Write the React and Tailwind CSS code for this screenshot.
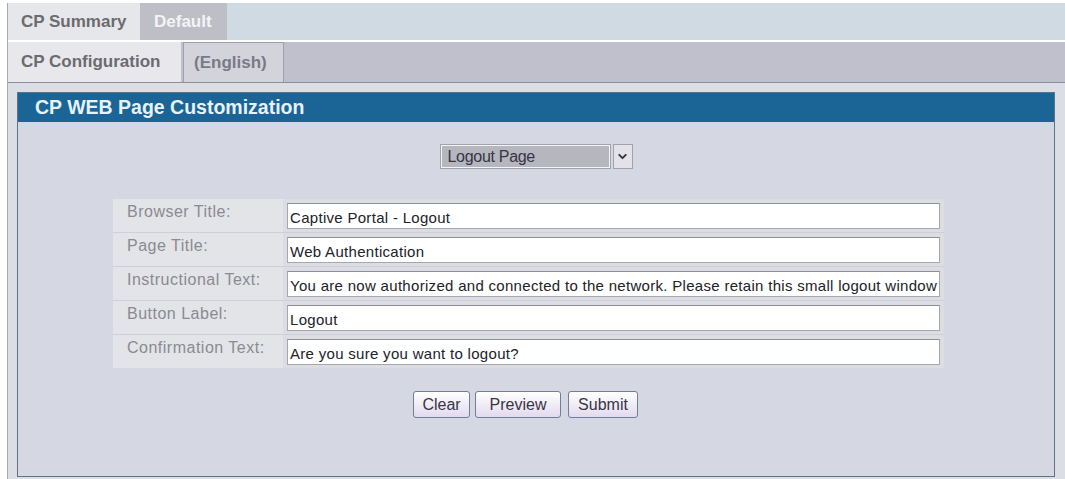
import React from 'react';
import { ChevronDown } from 'lucide-react';

const fields = [
  { label: 'Browser Title:', value: 'Captive Portal - Logout' },
  { label: 'Page Title:', value: 'Web Authentication' },
  {
    label: 'Instructional Text:',
    value:
      'You are now authorized and connected to the network. Please retain this small logout window to end your session.',
  },
  { label: 'Button Label:', value: 'Logout' },
  { label: 'Confirmation Text:', value: 'Are you sure you want to logout?' },
];

function Button({ children, width }) {
  return (
    <button
      className={`h-[27px] ${width} rounded-[3px] border border-[#6f7f9a] bg-gradient-to-b from-white to-[#e2daee] text-[16px] text-[#3a3445] leading-none`}
    >
      {children}
    </button>
  );
}

export default function App() {
  return (
    <div className="w-[1065px] h-[479px] overflow-hidden bg-white pt-[3px] font-['Liberation_Sans',Arial,sans-serif]">
      <div className="ml-[7px] h-full flex flex-col border-l border-[#a9abb3]">
        {/* Top tabs */}
        <div className="h-[37px] flex bg-[#cfdae2] shrink-0">
          <div className="w-[132px] flex items-center pl-[13px] bg-[#e6e7ea] text-[17px] font-bold text-[#6b6b70]">
            CP Summary
          </div>
          <div className="w-[87px] flex items-center pl-[14px] bg-[#bebec6] text-[17px] font-bold text-[#f4f4f6]">
            Default
          </div>
        </div>
        <div className="h-[2px] bg-white shrink-0" />

        {/* Second tab row */}
        <div className="h-[41px] flex bg-[#c0bfcc] border-b border-[#8e8e9c] shrink-0">
          <div className="w-[173px] flex items-center pl-[13px] bg-[#e8e8ec] text-[17px] font-bold text-[#6b6b70]">
            CP Configuration
          </div>
          <div className="ml-[2px] w-[101px] flex items-center pl-[10px] bg-[#d3d3db] border-x border-t border-[#a0a0ac] text-[17px] font-bold text-[#7a7a86]">
            (English)
          </div>
        </div>

        {/* Body */}
        <div className="flex-1 bg-[#dcdee5] pt-[9px] pl-[9px] pr-[10px]">
          <div className="h-[385px] border border-[#5d7189] bg-[#d5d8e2] flex flex-col">
            <div className="h-[29px] flex items-center pl-[17px] bg-[#1a6496] text-[19.5px] font-bold text-[#e6f2fc] shrink-0">
              CP WEB Page Customization
            </div>

            {/* Page select */}
            <div className="mt-[22px] flex justify-center">
              <div className="flex items-center gap-[2px]">
                <div className="w-[171px] h-[25px] border border-[#a2a2aa] bg-[#f4f4f6] p-px">
                  <div className="h-full bg-[#b6b6be] pl-[6px] flex items-center text-[16px] text-[#353545] tracking-[-0.3px]">
                    Logout Page
                  </div>
                </div>
                <div className="w-[20px] h-[25px] border border-[#a2a2aa] bg-[#e2e2e8] flex items-center justify-center">
                  <ChevronDown size={13} strokeWidth={3.5} className="text-[#333340]" />
                </div>
              </div>
            </div>

            {/* Field table */}
            <div className="mt-[30px] ml-[95px] w-[831px] grid grid-cols-[170px_1fr] gap-y-px bg-[#cfd0d7]">
              {fields.map((f) => (
                <React.Fragment key={f.label}>
                  <div className="h-[33px] bg-[#e3e4e8] pl-[14px] pt-[4px] text-[16px] leading-[18px] tracking-[0.5px] text-[#8a8a92]">
                    {f.label}
                  </div>
                  <div className="h-[33px] bg-[#dcdde3] px-[4px] pt-[4px]">
                    <input
                      readOnly
                      defaultValue={f.value}
                      className="w-full h-[26px] border border-[#a6a7ae] border-t-[#8e8f96] bg-white pl-[2px] pt-[2px] text-[15px] text-[#222228] tracking-[0.3px] outline-none"
                    />
                  </div>
                </React.Fragment>
              ))}
            </div>

            {/* Actions */}
            <div className="mt-[23px] ml-[395px] flex gap-[5px]">
              <Button width="w-[57px]">Clear</Button>
              <Button width="w-[86px]">Preview</Button>
              <div className="ml-[2px] flex">
                <Button width="w-[70px]">Submit</Button>
              </div>
            </div>
          </div>
        </div>
      </div>
    </div>
  );
}
